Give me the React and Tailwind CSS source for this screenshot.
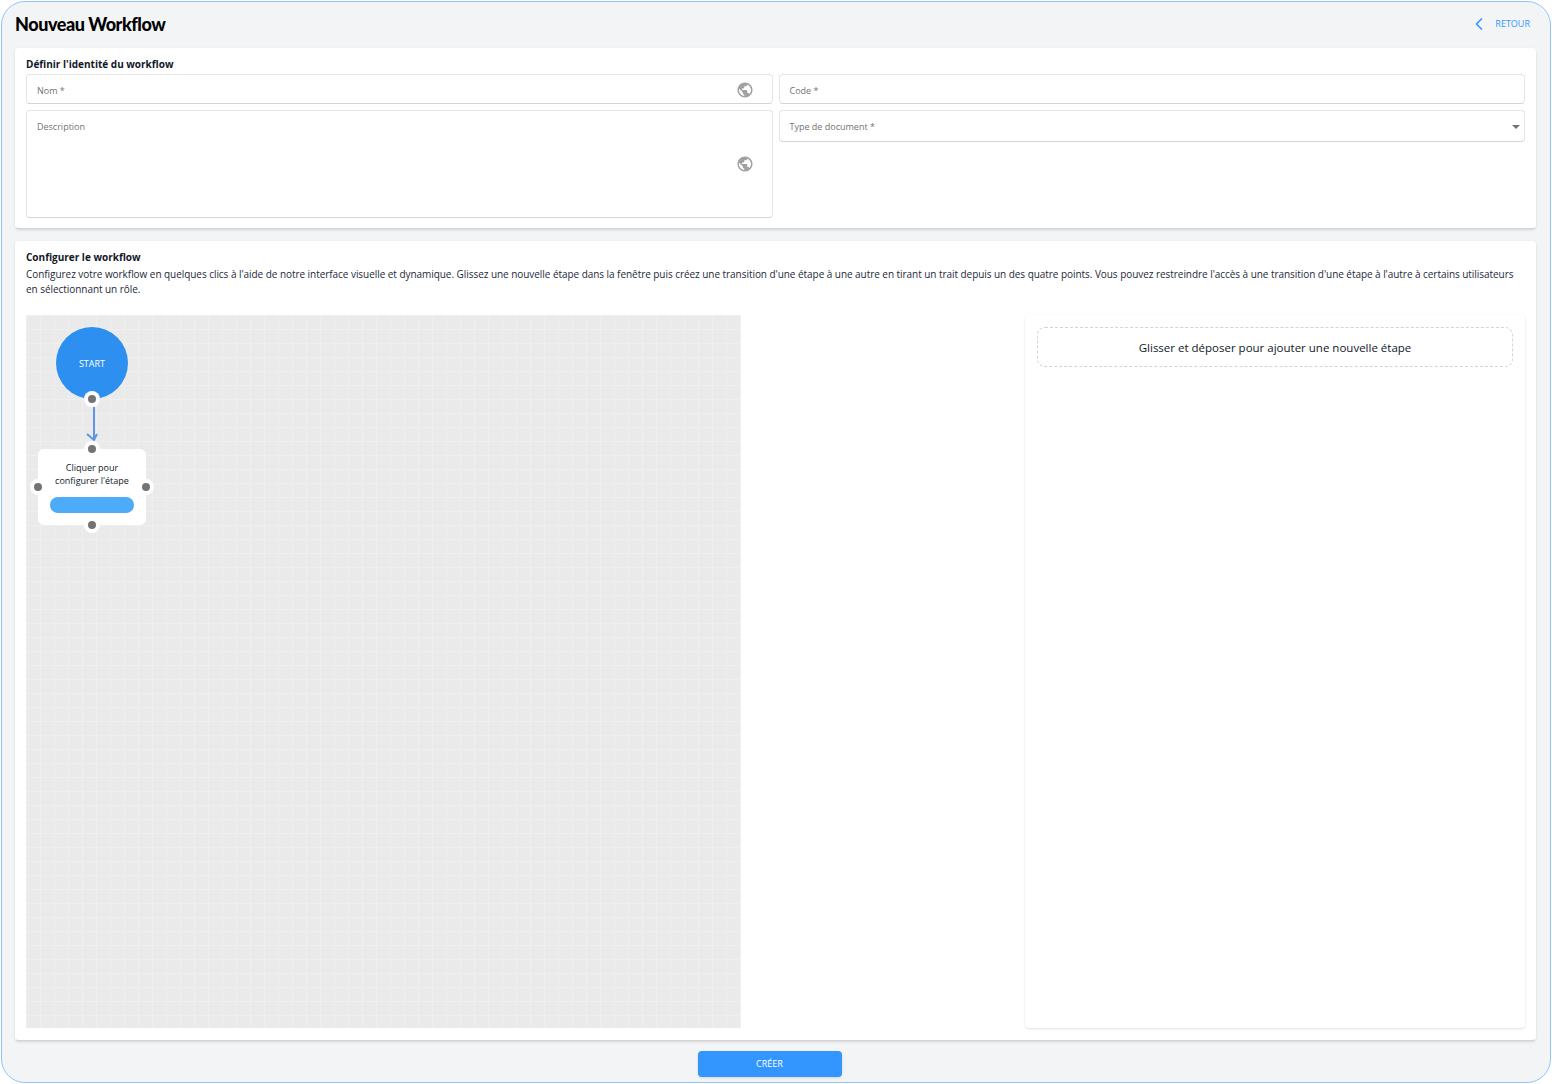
import React from "react";
import { ChevronLeft } from "lucide-react";

const sans = { fontFamily: '"Open Sans", sans-serif' };

function Globe({ className }) {
  return (
    <svg viewBox="0 0 24 24" className={className} fill="currentColor">
      <path d="M12 2C6.48 2 2 6.48 2 12s4.48 10 10 10 10-4.48 10-10S17.52 2 12 2zm-1 17.93C7.05 19.44 4 16.08 4 12c0-.62.08-1.21.21-1.79L9 15v1c0 1.1.9 2 2 2v1.93zm6.9-2.54c-.26-.81-1-1.39-1.9-1.39h-1v-3c0-.55-.45-1-1-1H8v-2h2c.55 0 1-.45 1-1V7h2c1.1 0 2-.9 2-2v-.41c2.93 1.19 5 4.06 5 7.41 0 2.08-.8 3.97-2.1 5.39z" />
    </svg>
  );
}

function Handle({ className }) {
  return (
    <div className={`absolute flex h-4 w-4 items-center justify-center rounded-full bg-white ${className}`}>
      <div className="h-2 w-2 rounded-full bg-neutral-500" />
    </div>
  );
}

function Field({ label, className, children }) {
  return (
    <div className={`relative flex rounded border border-neutral-200 border-b-neutral-300 bg-white pl-2.5 ${className}`}>
      <span className="text-[9px] leading-3 text-neutral-500">{label}</span>
      {children}
    </div>
  );
}

export default function App() {
  return (
    <div className="h-[1084px] bg-white p-px" style={sans}>
      <div className="h-full rounded-3xl border border-blue-300 bg-gray-100 pl-3 pr-3.5">
        <div className="flex h-full flex-col pl-px">
          <header className="flex h-11 shrink-0 items-center justify-between pr-1.5">
            <h1 className="text-lg font-black tracking-tight text-black" style={{ fontFamily: "Lato, sans-serif" }}>
              Nouveau Workflow
            </h1>
            <div className="flex items-center gap-1.5 text-[#3396ff]">
              <ChevronLeft className="h-5 w-5" />
              <span className="text-[9px]">RETOUR</span>
            </div>
          </header>

          <section className="mt-0.5 flex shrink-0 flex-col rounded-sm border-x border-b border-x-white border-b-neutral-300 bg-white px-2.5 pb-2.5 pt-2.5 shadow">
            <h2 className="text-[10px] font-bold leading-3 text-gray-900">Définir l'identité du workflow</h2>
            <div className="mt-1 grid grid-cols-2 gap-x-1.5">
              <div className="flex flex-col gap-1.5">
                <Field label="Nom *" className="h-7.5 items-center pt-1">
                  <Globe className="absolute right-4.5 top-1.5 h-4.5 w-4.5 text-neutral-400" />
                </Field>
                <Field label="Description" className="h-27 pt-2.5">
                  <Globe className="absolute right-4.5 top-11 h-4.5 w-4.5 text-neutral-400" />
                </Field>
              </div>
              <div className="flex flex-col gap-1.5">
                <Field label="Code *" className="h-7.5 items-center pt-1" />
                <Field label="Type de document *" className="h-8 items-center pt-0.5">
                  <div className="absolute right-1 top-3.5 h-0 w-0 border-x-4 border-t-4 border-x-transparent border-t-neutral-500" />
                </Field>
              </div>
            </div>
          </section>

          <section className="mb-px mt-3 flex min-h-0 flex-1 flex-col rounded-sm border-x border-b border-x-white border-b-neutral-300 bg-white px-2.5 pb-3 pt-2.5 shadow">
            <h2 className="text-[10px] font-bold leading-3 text-gray-900">Configurer le workflow</h2>
            <p className="mt-1 text-[10px] leading-normal tracking-[-0.05px] text-gray-800">
              Configurez votre workflow en quelques clics à l'aide de notre interface visuelle et dynamique. Glissez une nouvelle étape dans la fenêtre puis créez une transition d'une étape à une autre en tirant un trait depuis un des quatre points. Vous pouvez restreindre l'accès à une transition d'une étape à l'autre à certains utilisateurs en sélectionnant un rôle.
            </p>
            <div className="mt-4.5 flex min-h-0 flex-1 justify-between">
              <div className="relative w-[715px] bg-[#eaeaea] bg-[linear-gradient(#efefef_1px,transparent_1px),linear-gradient(90deg,#efefef_1px,transparent_1px)] bg-[size:14px_14px]">
                <div className="absolute left-7.5 top-3 flex h-18 w-18 items-center justify-center rounded-full bg-[#2d8fef] pt-0.5">
                  <span className="text-[9px] font-medium text-white">START</span>
                </div>
                <Handle className="left-14.5 top-19" />
                <svg viewBox="0 0 20 44" className="absolute left-14.5 top-23 h-11 w-5 text-[#5f95e8]" fill="none" stroke="currentColor" strokeWidth="2">
                  <path d="M10 0V32" />
                  <path d="M3 27L10 33L13 27" />
                </svg>
                <div className="absolute left-3 top-33.5 flex h-19 w-27 flex-col items-center rounded-md bg-white px-3 pt-3">
                  <p className="text-center text-[9px] leading-[13px] text-gray-900">
                    Cliquer pour
                    <br />
                    configurer l'étape
                  </p>
                  <div className="mt-2.5 h-4 w-full rounded-lg bg-[#4dabf7]" />
                </div>
                <Handle className="left-14.5 top-31.5" />
                <Handle className="left-1 top-41" />
                <Handle className="left-28 top-41" />
                <Handle className="left-14.5 top-50.5" />
              </div>
              <aside className="w-125 rounded bg-white p-3 shadow">
                <div className="flex h-10 items-center justify-center rounded-lg border border-dashed border-neutral-300 pt-0.5 text-[11.5px] text-gray-900">
                  Glisser et déposer pour ajouter une nouvelle étape
                </div>
              </aside>
            </div>
          </section>

          <footer className="flex h-10 shrink-0 justify-center pr-3 pt-2">
            <button className="mt-px h-6.5 w-36 rounded-sm bg-[#3396ff] text-[9px] font-medium text-white shadow">CRÉER</button>
          </footer>
        </div>
      </div>
    </div>
  );
}
